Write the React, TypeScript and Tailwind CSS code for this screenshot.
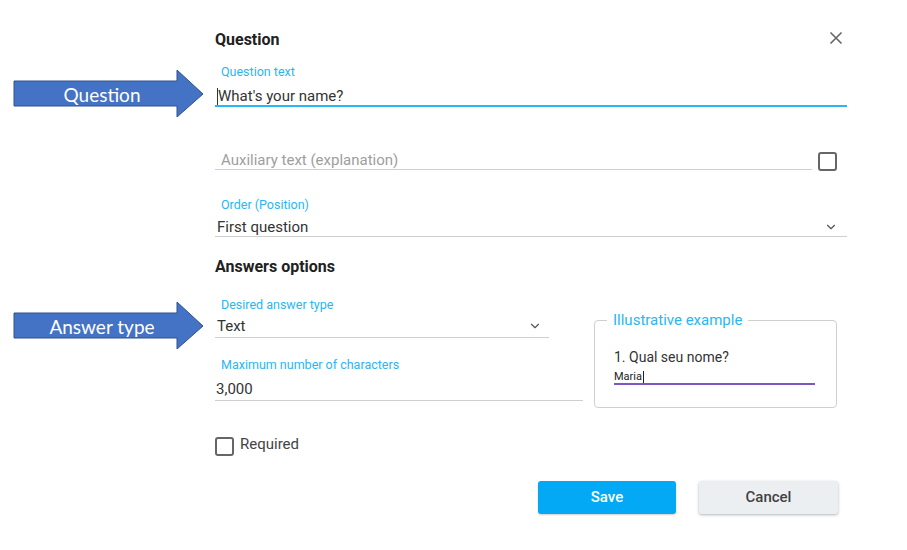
import { ChevronDown } from "lucide-react";

const Arrow = ({ label }: { label: string }) => (
  <svg width="192" height="50" viewBox="0 0 192 50" className="block">
    <polygon
      points="1,12 164,12 164,1 190,25 164,48 164,37 1,37"
      fill="#4472c4"
      stroke="#2f528f"
      strokeWidth="1"
    />
    <text
      x="89"
      y="25"
      textAnchor="middle"
      dominantBaseline="central"
      fill="#ffffff"
      fontSize="19"
      fontFamily="Lato, 'Open Sans', sans-serif"
    >
      {label}
    </text>
  </svg>
);

const Chevron = ({ className }: { className?: string }) => (
  <ChevronDown size={14} strokeWidth={2} className={"text-[#555] " + (className ?? "")} />
);

const Checkbox = () => (
  <span className="block w-[19px] h-[19px] border-2 border-[#666] rounded-[3px] shrink-0" />
);

export default function App() {
  return (
    <div className="w-[907px] h-[550px] bg-white font-['Roboto',sans-serif] text-[#333] flex flex-col">
      {/* header */}
      <div className="ml-[215px] w-[632px] mt-[30px] h-[20px] flex items-center justify-between">
        <h2 className="text-[16px] leading-[20px] font-bold text-[#212121]">Question</h2>
        <svg width="14" height="14" viewBox="0 0 14 14" className="mr-[4px] mt-[-5px]">
          <path d="M1.5 1.5 L12.5 12.5 M12.5 1.5 L1.5 12.5" stroke="#666" strokeWidth="1.6" />
        </svg>
      </div>

      {/* question text */}
      <div className="mt-[14px] flex items-start">
        <div className="w-[215px] shrink-0 pl-[13px] pt-[5px]">
          <Arrow label="Question" />
        </div>
        <div className="w-[632px]">
          <div className="pl-[6px] text-[12.5px] leading-[16px] text-[#29b6f6]">Question text</div>
          <div className="mt-[7px] border-b-2 border-[#29b6f6] flex items-center">
            <span className="w-px h-[17px] bg-[#333] ml-[2px]" />
            <span className="text-[15px] leading-[18px] text-[#333]">What's your name?</span>
          </div>
        </div>
      </div>

      {/* auxiliary text */}
      <div className="mt-[32px] ml-[215px] w-[632px] flex items-start">
        <div className="w-[597px] border-b border-[#cfcfcf] pl-[6px] text-[15px] leading-[18px] text-[#9e9e9e]">
          Auxiliary text (explanation)
        </div>
        <div className="ml-[6px] mt-[1px]">
          <Checkbox />
        </div>
      </div>

      {/* order */}
      <div className="mt-[26px] ml-[215px] w-[632px]">
        <div className="pl-[6px] text-[12.5px] leading-[16px] text-[#29b6f6]">Order (Position)</div>
        <div className="mt-[5px] border-b border-[#cfcfcf] flex items-center justify-between">
          <span className="pl-[2px] text-[15px] leading-[18px]">First question</span>
          <Chevron className="mr-[9px]" />
        </div>
      </div>

      {/* answers heading */}
      <h2 className="mt-[20px] ml-[215px] text-[16px] leading-[20px] font-bold text-[#212121]">
        Answers options
      </h2>

      {/* answer type */}
      <div className="mt-[20px] flex items-start">
        <div className="w-[215px] shrink-0 pl-[13px] pt-[4px]">
          <Arrow label="Answer type" />
        </div>
        <div className="w-[368px]">
          <div className="pl-[6px] text-[12.5px] leading-[16px] text-[#29b6f6]">Desired answer type</div>
          <div className="mt-[4px] w-[334px] pb-[2px] border-b border-[#cfcfcf] flex items-center justify-between">
            <span className="pl-[2px] text-[15px] leading-[18px]">Text</span>
            <Chevron className="mr-[7px]" />
          </div>
          <div className="mt-[19px] pl-[6px] text-[12.5px] leading-[16px] text-[#29b6f6]">
            Maximum number of characters
          </div>
          <div className="mt-[7px] pb-[2px] border-b border-[#cfcfcf] pl-[1px] text-[15px] leading-[18px]">
            3,000
          </div>
        </div>
        <fieldset className="ml-[11px] mt-[13px] w-[243px] h-[98px] border border-[#cfcfcf] rounded-[4px]">
          <legend className="ml-[12px] px-[6px] text-[15px] leading-[20px] text-[#29b6f6]">
            Illustrative example
          </legend>
          <div className="pl-[19px] pr-[21px]">
            <div className="mt-[18px] text-[14px] leading-[18px] text-[#333]">1. Qual seu nome?</div>
            <div className="mt-[4px] border-b-2 border-[#7e57c2] flex items-center">
              <span className="text-[11px] leading-[13px] text-[#222]">Maria</span>
              <span className="w-px h-[12px] bg-[#222] ml-[1px]" />
            </div>
          </div>
        </fieldset>
      </div>

      {/* required */}
      <div className="mt-[29px] ml-[215px] flex items-center gap-[6px]">
        <Checkbox />
        <span className="text-[15px] leading-[18px] text-[#444] -mt-[5px]">Required</span>
      </div>

      {/* buttons */}
      <div className="mt-[25px] ml-[538px] flex gap-[23px]">
        <button className="w-[138px] h-[33px] rounded-[3px] bg-[#03a9f4] text-white text-[15px] font-medium shadow-[0_1px_2px_rgba(0,0,0,0.2)]">
          Save
        </button>
        <button className="w-[139px] h-[33px] rounded-[3px] bg-[#eceff1] text-[#424242] text-[15px] font-medium shadow-[0_1px_3px_rgba(0,0,0,0.3)]">
          Cancel
        </button>
      </div>
    </div>
  );
}
